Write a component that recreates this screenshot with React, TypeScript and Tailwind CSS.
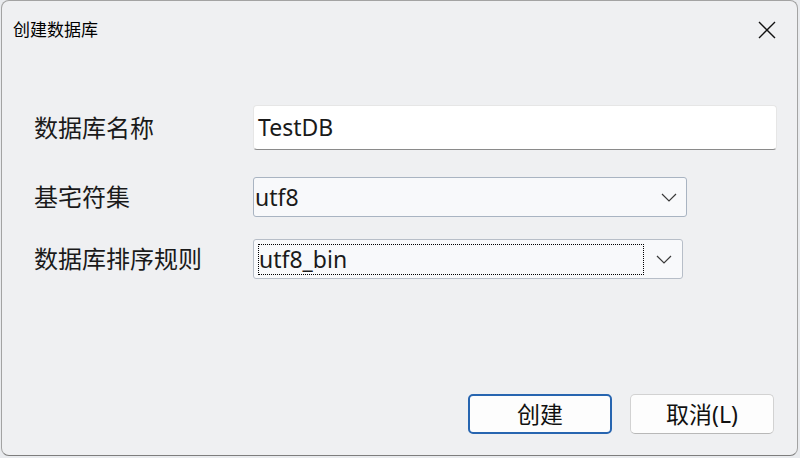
import React from "react";

const font = {
  fontFamily: '"Noto Sans", "Noto Sans CJK SC", sans-serif',
};

function Chevron() {
  return (
    <svg width="16" height="9" viewBox="0 0 16 9" fill="none">
      <path d="M1 1l7 7 7-7" stroke="#3a3a3a" strokeWidth="1.2" />
    </svg>
  );
}

export default function App() {
  return (
    <div className="h-[458px] w-[800px] bg-[#e9ebee] pl-[1px]" style={font}>
      <div className="flex h-[456px] w-[797px] flex-col rounded-[8px] border border-[#a3a3a3] border-b-[#7d7d7d] bg-[#eff0f2]">
        {/* title bar */}
        <div className="flex h-[58px] items-center justify-between pl-[11px] pr-[21px]">
          <span className="text-[17px] text-black">创建数据库</span>
          <svg width="18" height="18" viewBox="0 0 18 18">
            <path d="M1 1l16 16M17 1L1 17" stroke="#111" strokeWidth="1.4" />
          </svg>
        </div>

        {/* form */}
        <div className="mt-[46px] flex flex-col pl-[32px] text-[23px] text-[#1a1a1a]">
          <div className="flex items-center">
            <span className="w-[219px] text-[24px]">数据库名称</span>
            <div className="flex h-[45px] w-[524px] items-center rounded-[4px] border border-[#e6e6e6] border-b-[#8a8a8a] bg-white pl-[4px]">
              TestDB
            </div>
          </div>

          <div className="mt-[27px] flex items-center">
            <span className="w-[219px] text-[24px]">基宅符集</span>
            <div className="flex h-[40px] w-[434px] items-center justify-between rounded-[3px] border border-[#a9b4c2] bg-[#f8f9fb] pl-[1px] pr-[9px]">
              <span>utf8</span>
              <Chevron />
            </div>
          </div>

          <div className="mt-[22px] flex items-center">
            <span className="w-[219px] text-[24px]">数据库排序规则</span>
            <div className="flex h-[40px] w-[430px] items-center justify-between rounded-[3px] border border-[#b7bec8] bg-[#f8f9fb] pl-[4px] pr-[10px]">
              <div className="flex h-[31px] w-[386px] items-center border border-dotted border-black leading-none">
                utf8_bin
              </div>
              <Chevron />
            </div>
          </div>
        </div>

        {/* buttons */}
        <div className="mt-[115px] flex justify-end gap-[18px] pr-[23px] text-[23px] text-[#111]">
          <button className="flex h-[40px] w-[144px] items-center justify-center rounded-[5px] border-2 border-[#2765b0] bg-[#fdfdfd]">
            创建
          </button>
          <button className="flex h-[40px] w-[144px] items-center justify-center rounded-[5px] border border-[#d2d2d2] border-b-[#b8b8b8] bg-[#fdfdfd]">
            取消(L)
          </button>
        </div>
      </div>
    </div>
  );
}
